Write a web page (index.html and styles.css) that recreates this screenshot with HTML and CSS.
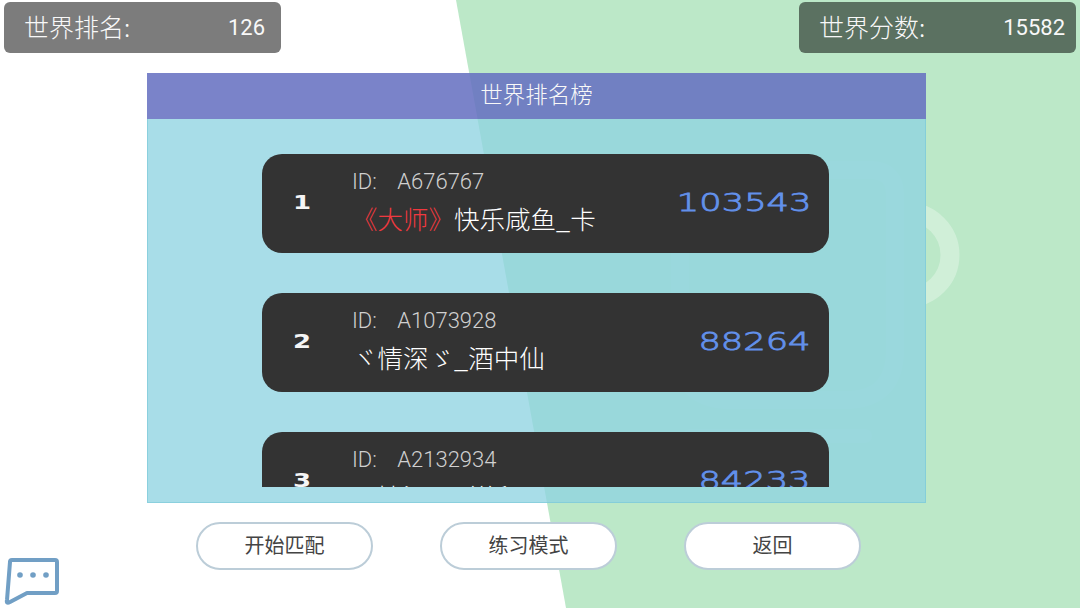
FILE: index.html
```html
<!doctype html>
<html lang="zh-CN">
<head>
    <meta charset="UTF-8">
    <title>世界排名榜</title>
    <link rel="stylesheet" href="styles.css">
</head>
<body>

<div class="bg">
    <svg class="cup" width="1080" height="608" viewBox="0 0 1080 608">
        <circle cx="907" cy="255" r="43" fill="none" stroke="#fff" stroke-opacity=".3" stroke-width="19"/>
        <!-- the ring only shows beside the panel -->
        <rect x="840" y="190" width="86" height="130" fill="#bce8c8"/>
        <path d="M700 170H870Q895 170 895 195V350Q895 400 845 400H730Q680 400 680 350V190Q680 170 700 170Z" fill="#bce8c8"/>
        <path d="M700 170H870Q895 170 895 195V350Q895 400 845 400H730Q680 400 680 350V190Q680 170 700 170Z" fill="none" stroke="#fff" stroke-opacity=".12" stroke-width="18"/>
        <path d="M690 436H865" fill="none" stroke="#fff" stroke-opacity=".12" stroke-width="14" stroke-linecap="round"/>
    </svg>
</div>

<div class="page">
    <div class="top">
        <div class="stat">
            <span>世界排名:</span>
            <span class="num">126</span>
        </div>
        <div class="stat">
            <span>世界分数:</span>
            <span class="num">15582</span>
        </div>
    </div>

    <div class="panel">
        <h2>世界排名榜</h2>
        <div class="body">
            <ul class="list">
                <li>
                    <span class="rank">1</span>
                    <div class="info">
                        <p class="id">ID: <b>A676767</b></p>
                        <p class="name"><em>《大师》</em>快乐咸鱼_卡</p>
                    </div>
                    <span class="score">103543</span>
                </li>
                <li>
                    <span class="rank">2</span>
                    <div class="info">
                        <p class="id">ID: <b>A1073928</b></p>
                        <p class="name">ヾ情深ゞ_酒中仙</p>
                    </div>
                    <span class="score">88264</span>
                </li>
                <li>
                    <span class="rank">3</span>
                    <div class="info">
                        <p class="id">ID: <b>A2132934</b></p>
                        <p class="name">ヾ情深ゞ_祥和</p>
                    </div>
                    <span class="score">84233</span>
                </li>
            </ul>
        </div>
    </div>

    <div class="btns">
        <button>开始匹配</button>
        <button>练习模式</button>
        <button>返回</button>
    </div>
</div>

<svg class="chat" width="56" height="50" viewBox="0 0 56 50">
    <path d="M8 3H51Q53 3 53 5V34Q53 36 51 36H23L6 45Q2 47 3 43L6 5Q6 3 8 3Z" fill="none" stroke="#719fc5" stroke-width="4" stroke-linejoin="round"/>
    <circle cx="16" cy="18" r="2.8" fill="#719fc5"/>
    <circle cx="29" cy="18" r="2.8" fill="#719fc5"/>
    <circle cx="42" cy="18" r="2.8" fill="#719fc5"/>
</svg>

</body>
</html>
```

FILE: styles.css
```css
*{
    box-sizing: border-box;
}
body{
    margin: 0;
    width: 1080px;
    height: 608px;
    overflow: hidden;
    background-color: #fff;
    font-family: "Noto Sans CJK SC", "Roboto", sans-serif;
    font-weight: 300;
}
ul{
    margin: 0;
    padding: 0;
    list-style: none;
}
p{
    margin: 0;
}

/* background */
.bg{
    position: absolute;
    left: 0;
    top: 0;
    width: 1080px;
    height: 608px;
    background-color: #bce8c8;
    clip-path: polygon(456px 0, 1080px 0, 1080px 608px, 566px 608px);
}
.cup{
    display: block;
}

.page{
    position: relative;
    height: 608px;
    padding: 2px 4px 0;
}

/* top stats */
.top{
    display: flex;
    justify-content: space-between;
}
.stat{
    width: 277px;
    height: 51px;
    padding: 0 11px 3px 20px;
    border-radius: 6px;
    background-color: rgba(0, 0, 0, .515);
    color: #f8f8f8;
    font-size: 25px;
    display: flex;
    justify-content: space-between;
    align-items: center;
}
.stat:first-child{
    padding-right: 16px;
}
.num{
    font-family: "Roboto", sans-serif;
    font-weight: 400;
    font-size: 22px;
    margin-top: 3px;
}

/* panel */
.panel{
    width: 779px;
    margin: 20px 0 0 143px;
}
h2{
    margin: 0;
    height: 46px;
    line-height: 41px;
    text-align: center;
    font-size: 22.5px;
    font-weight: 300;
    color: #f8f8f8;
    background-color: rgba(102, 113, 193, .87);
}
.body{
    height: 384px;
    padding: 35px 96px 16px 114px;
    background-color: rgba(142, 211, 225, .77);
    border: 1px solid rgba(120, 200, 215, .6);
    border-top: 0;
}
.list{
    height: 333px;
    overflow: hidden;
    display: flex;
    flex-direction: column;
    gap: 40px;
}
.list li{
    flex: none;
    height: 99px;
    padding: 0 18px 0 31px;
    border-radius: 20px;
    background-color: #333;
    display: flex;
    align-items: center;
}
.rank{
    width: 59px;
    margin-top: -3px;
    font-family: "DejaVu Sans", sans-serif;
    font-weight: 700;
    font-size: 20px;
    color: #f5f5f5;
    transform: scaleX(1.3);
    transform-origin: 0 50%;
}
.info{
    flex: 1;
}
.id{
    height: 30px;
    line-height: 30px;
    margin-top: -5px;
    font-family: "Roboto", sans-serif;
    font-size: 22px;
    font-weight: 300;
    color: #d0d0d0;
}
.id b{
    font-weight: 300;
    margin-left: 15px;
}
.name{
    height: 36px;
    line-height: 36px;
    margin-top: 3px;
    font-size: 25.5px;
    color: #fff;
}
.name em{
    font-style: normal;
    color: #f0393f;
}
.score{
    margin-top: -2px;
    font-family: "DejaVu Sans", sans-serif;
    font-size: 25px;
    color: #6290ea;
    -webkit-text-stroke: .8px #6290ea;
    transform: scaleX(1.41);
    transform-origin: 100% 50%;
}

/* buttons */
.btns{
    display: flex;
    gap: 67px;
    margin: 19px 0 0 192px;
}
button{
    width: 177px;
    height: 48px;
    padding: 0 0 4px;
    border: 2px solid #bccdd8;
    border-radius: 24px;
    background-color: #fff;
    font-family: inherit;
    font-weight: 400;
    font-size: 20px;
    color: #444;
}

.chat{
    position: absolute;
    left: 4px;
    top: 557px;
}
```
